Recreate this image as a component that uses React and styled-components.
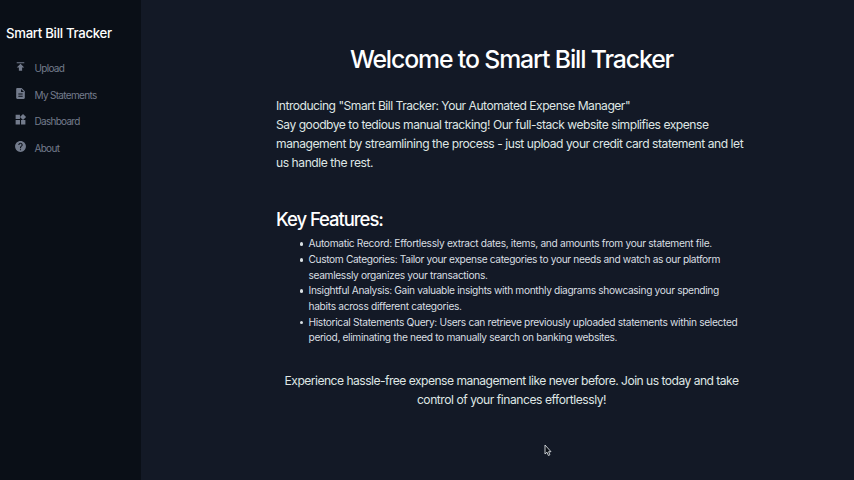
import React from "react";
import styled, { createGlobalStyle } from "styled-components";
import { MdPublish, MdDescription, MdWidgets, MdHelp } from "react-icons/md";

const GlobalStyle = createGlobalStyle`
  * { box-sizing: border-box; }
  body { margin: 0; background: #131926; font-family: Inter, Roboto, sans-serif; }
`;

const Page = styled.div`
  position: relative;
  display: flex;
  width: 854px;
  height: 480px;
  overflow: hidden;
  background: #131926;
  color: #fff;
`;

const Sidebar = styled.aside`
  width: 141px;
  padding: 24px 6px 0;
  background: #0a0f17;
`;

const Brand = styled.div`
  font-size: 13.2px;
  font-weight: 450;
  line-height: 18px;
  letter-spacing: -0.3px;
  white-space: nowrap;
`;

const Nav = styled.nav`
  display: flex;
  flex-direction: column;
  padding: 13px 0 0 8px;
`;

const NavItem = styled.a`
  display: flex;
  align-items: center;
  height: 26.6px;
  gap: 7.5px;
  color: #737b8c;
  font-size: 10px;
  letter-spacing: ${(p) => p.$tracking}px;
  white-space: nowrap;

  svg { margin-bottom: 3px; }
`;

const Main = styled.main`
  width: 471px;
  margin-left: 135px;
  padding-top: 43px;
`;

const Title = styled.h1`
  margin: 0;
  font-size: 24.8px;
  font-weight: 450;
  line-height: 32px;
  letter-spacing: -1.12px;
  text-align: center;
`;

const Intro = styled.div`
  margin-top: 22.3px;
  color: #dfe6e4;
`;

const Subtitle = styled.h2`
  margin: 35.2px 0 0;
  font-size: 18.5px;
  font-weight: 450;
  line-height: 24px;
  letter-spacing: -1.05px;
`;

const Features = styled.ul`
  margin: 5px 0 0;
  padding: 0 0 0 32.5px;
  color: #d9dfe2;
  font-size: 10.2px;
  line-height: 15.65px;
`;

const Feature = styled.li`
  position: relative;
  list-style: none;

  &::before {
    content: "";
    position: absolute;
    left: -9px;
    top: 6px;
    width: 3.5px;
    height: 3.5px;
    border-radius: 50%;
    background: currentColor;
  }
`;

const Closing = styled.div`
  margin-top: 26.4px;
  color: #dfe6e4;
  text-align: center;
`;

const Line = styled.div`
  font-size: 12.1px;
  line-height: 18.75px;
  letter-spacing: ${(p) => p.$tracking}px;
  white-space: nowrap;
`;

const FeatureLine = styled.div`
  letter-spacing: ${(p) => p.$tracking}px;
  white-space: nowrap;
`;

const Cursor = styled.svg`
  position: absolute;
  left: 544px;
  top: 444px;
`;

const links = [
  { label: "Upload", Icon: MdPublish, tracking: -0.7 },
  { label: "My Statements", Icon: MdDescription, tracking: -0.68 },
  { label: "Dashboard", Icon: MdWidgets, tracking: -0.72 },
  { label: "About", Icon: MdHelp, tracking: -0.7 },
];

const intro = [
  ['Introducing "Smart Bill Tracker: Your Automated Expense Manager"', -0.49],
  ["Say goodbye to tedious manual tracking! Our full-stack website simplifies expense", -0.477],
  ["management by streamlining the process - just upload your credit card statement and let", -0.46],
  ["us handle the rest.", -0.45],
];

const features = [
  [["Automatic Record: Effortlessly extract dates, items, and amounts from your statement file.", -0.315]],
  [
    ["Custom Categories: Tailor your expense categories to your needs and watch as our platform", -0.365],
    ["seamlessly organizes your transactions.", -0.35],
  ],
  [
    ["Insightful Analysis: Gain valuable insights with monthly diagrams showcasing your spending", -0.35],
    ["habits across different categories.", -0.31],
  ],
  [
    ["Historical Statements Query: Users can retrieve previously uploaded statements within selected", -0.335],
    ["period, eliminating the need to manually search on banking websites.", -0.35],
  ],
];

const closing = [
  ["Experience hassle-free expense management like never before. Join us today and take", -0.52],
  ["control of your finances effortlessly!", -0.46],
];

export default function App() {
  return (
    <Page>
      <GlobalStyle />
      <Sidebar>
        <Brand>Smart Bill Tracker</Brand>
        <Nav>
          {links.map(({ label, Icon, tracking }) => (
            <NavItem key={label} $tracking={tracking}>
              <Icon size={13} />
              {label}
            </NavItem>
          ))}
        </Nav>
      </Sidebar>
      <Main>
        <Title>Welcome to Smart Bill Tracker</Title>
        <Intro>
          {intro.map(([text, tracking]) => (
            <Line key={text} $tracking={tracking}>{text}</Line>
          ))}
        </Intro>
        <Subtitle>Key Features:</Subtitle>
        <Features>
          {features.map((lines) => (
            <Feature key={lines[0][0]}>
              {lines.map(([text, tracking]) => (
                <FeatureLine key={text} $tracking={tracking}>{text}</FeatureLine>
              ))}
            </Feature>
          ))}
        </Features>
        <Closing>
          {closing.map(([text, tracking]) => (
            <Line key={text} $tracking={tracking}>{text}</Line>
          ))}
        </Closing>
      </Main>
      <Cursor width="8" height="13" viewBox="0 0 8 13">
        <path
          d="M1 1v9l2-1.8 1.4 3.3 1.5-.7-1.3-3.1H7z"
          fill="#0b0f16"
          stroke="#d8dce0"
          strokeWidth="0.9"
          strokeLinejoin="round"
        />
      </Cursor>
    </Page>
  );
}
